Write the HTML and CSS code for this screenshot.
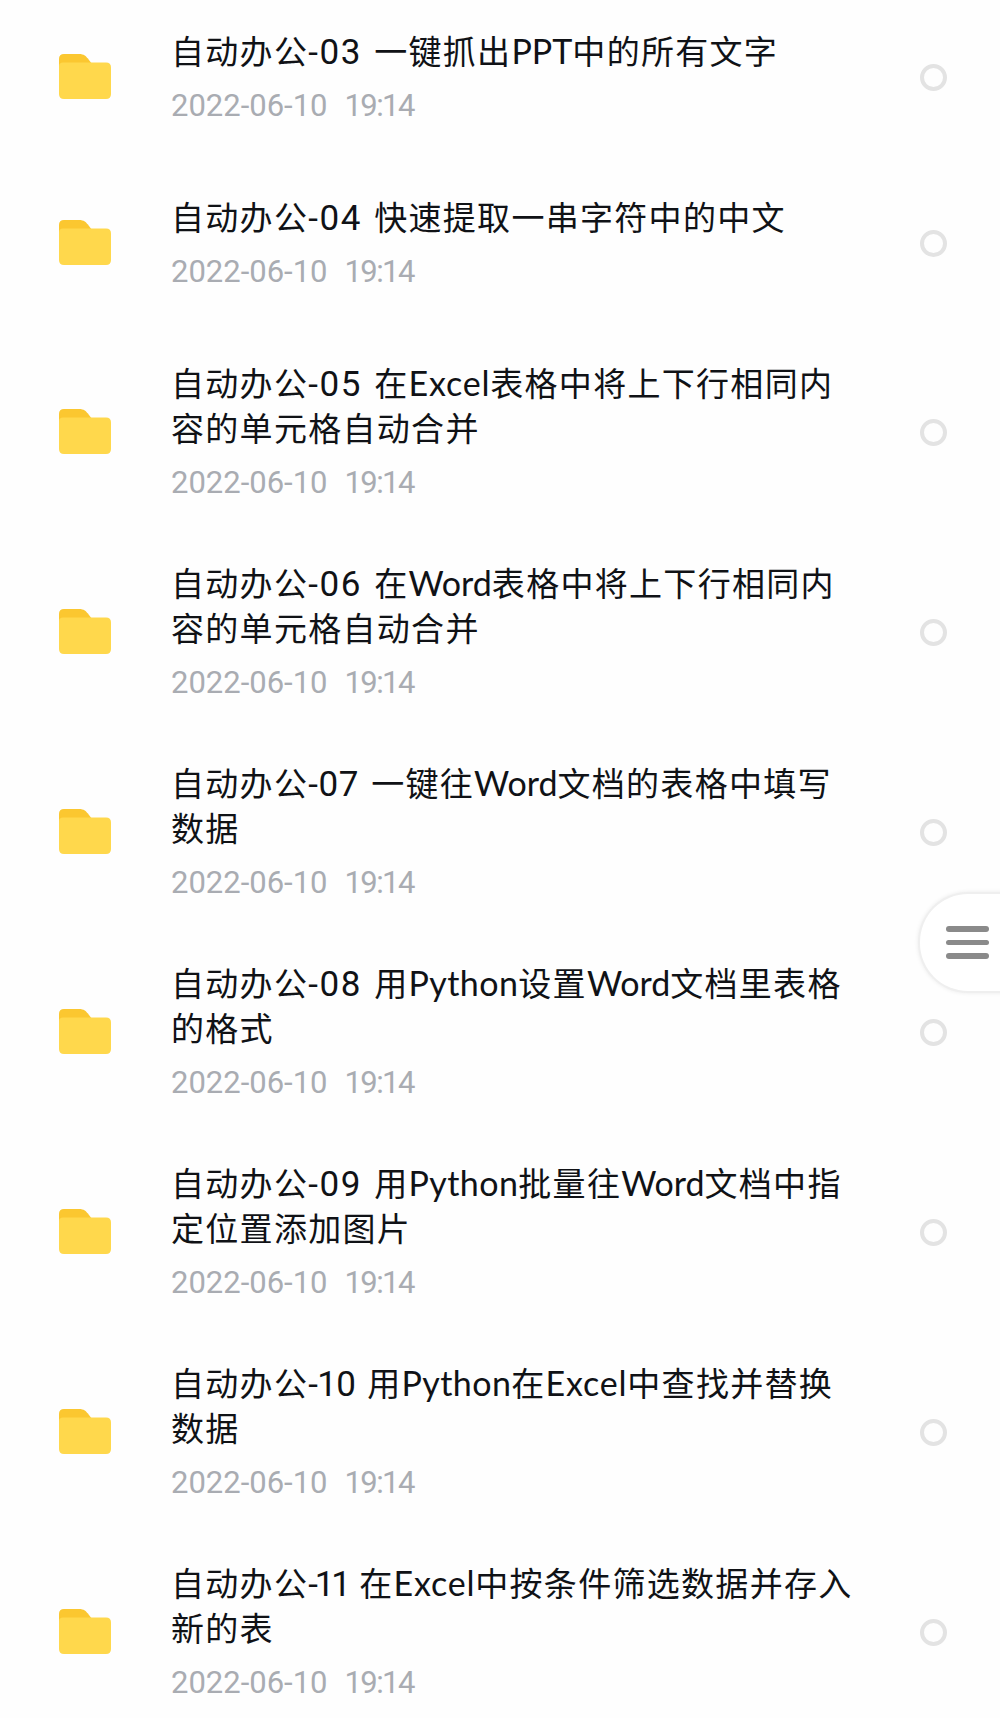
FILE: index.html
```html
<!DOCTYPE html>
<html lang="zh-CN">
<head>
<meta charset="utf-8">
<title>自动办公</title>
<link rel="stylesheet" href="styles.css">
</head>
<body>
<svg class="defs" width="0" height="0" aria-hidden="true">
  <symbol id="folder" viewBox="0 0 52 46">
    <path fill="#fbc730" d="M5 0H20C25 0 27 2 30 6L33 10V22H0V5Q0 0 5 0Z"/>
    <path fill="#ffd84c" d="M0 12Q0 8.500 4 8.500H47Q52 8.500 52 13.500V40Q52 45 47 45H5Q0 45 0 40Z"/>
  </symbol>
</svg>
<main class="list">
  <article class="row row-short"><svg class="folder"><use href="#folder"/></svg><div class="info"><h2 class="title">自动办公<span class="num">-03 </span>一键抓出<span class="latin">PPT</span>中的所有文字</h2><p class="date"><span>2022-06-10</span> <span class="time">19:14</span></p></div><span class="radio"></span></article>
  <article class="row row-short"><svg class="folder"><use href="#folder"/></svg><div class="info"><h2 class="title">自动办公<span class="num">-04 </span>快速提取一串字符中的中文</h2><p class="date"><span>2022-06-10</span> <span class="time">19:14</span></p></div><span class="radio"></span></article>
  <article class="row"><svg class="folder"><use href="#folder"/></svg><div class="info"><h2 class="title">自动办公<span class="num">-05 </span>在<span class="latin excel">Excel</span>表格中将上下行相同内<br>容的单元格自动合并</h2><p class="date"><span>2022-06-10</span> <span class="time">19:14</span></p></div><span class="radio"></span></article>
  <article class="row"><svg class="folder"><use href="#folder"/></svg><div class="info"><h2 class="title">自动办公<span class="num">-06 </span>在<span class="latin">Word</span>表格中将上下行相同内<br>容的单元格自动合并</h2><p class="date"><span>2022-06-10</span> <span class="time">19:14</span></p></div><span class="radio"></span></article>
  <article class="row"><svg class="folder"><use href="#folder"/></svg><div class="info"><h2 class="title">自动办公<span class="num num-07">-07 </span>一键往<span class="latin">Word</span>文档的表格中填写<br>数据</h2><p class="date"><span>2022-06-10</span> <span class="time">19:14</span></p></div><span class="radio"></span></article>
  <article class="row"><svg class="folder"><use href="#folder"/></svg><div class="info"><h2 class="title">自动办公<span class="num">-08 </span>用<span class="latin python">Python</span>设置<span class="latin">Word</span>文档里表格<br>的格式</h2><p class="date"><span>2022-06-10</span> <span class="time">19:14</span></p></div><span class="radio"></span></article>
  <article class="row"><svg class="folder"><use href="#folder"/></svg><div class="info"><h2 class="title">自动办公<span class="num">-09 </span>用<span class="latin python">Python</span>批量往<span class="latin">Word</span>文档中指<br>定位置添加图片</h2><p class="date"><span>2022-06-10</span> <span class="time">19:14</span></p></div><span class="radio"></span></article>
  <article class="row"><svg class="folder"><use href="#folder"/></svg><div class="info"><h2 class="title">自动办公<span class="num num-10">-10 </span>用<span class="latin python">Python</span>在<span class="latin excel">Excel</span>中查找并替换<br>数据</h2><p class="date"><span>2022-06-10</span> <span class="time">19:14</span></p></div><span class="radio"></span></article>
  <article class="row"><svg class="folder"><use href="#folder"/></svg><div class="info"><h2 class="title">自动办公<span class="num num-11">-11 </span>在<span class="latin excel">Excel</span>中按条件筛选数据并存入<br>新的表</h2><p class="date"><span>2022-06-10</span> <span class="time">19:14</span></p></div><span class="radio"></span></article>
</main>
<button class="menu" aria-label="菜单"><span class="bar"></span><span class="bar"></span><span class="bar"></span></button>
</body>
</html>
```
FILE: styles.css
```css
* { box-sizing: border-box; }
body {
  margin: 0;
  position: relative;
  height: 1718px;
  overflow: hidden;
  background: #fefefe;
  font-family: Lato, "Noto Sans CJK SC", sans-serif;
}
.defs { position: absolute; }
.row {
  display: grid;
  grid-template-columns: 52px 689px 28px;
  column-gap: 60px;
  align-items: center;
  height: 200px;
  padding-left: 59px;
}
.row-short { height: 166px; }
.row-short:first-child { margin-top: -6px; }
.row-short:nth-child(2) { margin-bottom: 6px; }
.folder { display: block; width: 52px; height: 46px; }
.info { white-space: nowrap; padding-top: 3px; }
.title {
  margin: 0;
  font-size: 33px;
  font-weight: 400;
  line-height: 45px;
  letter-spacing: 1.3px;
  color: #101216;
}
.latin { font-size: 34px; line-height: 1; letter-spacing: 0; }
.excel { letter-spacing: .8px; }
.python { letter-spacing: .4px; }
.num {
  display: inline-block;
  width: 66px;
  font-family: Roboto, sans-serif;
  font-size: 35px;
  line-height: 1;
  letter-spacing: 1.6px;
}
.num-07 { width: 63px; letter-spacing: .6px; }
.num-10 { width: 59px; letter-spacing: -.7px; }
.num-11 { width: 51px; letter-spacing: -3.2px; }
.date {
  display: flex;
  gap: 17px;
  margin: 9px 0 0;
  font-family: Roboto, sans-serif;
  font-size: 31px;
  line-height: 46px;
  color: #a9acb2;
}
.time { letter-spacing: -1.6px; }
.radio {
  width: 27px;
  height: 27px;
  border: 4px solid #e3e3e3;
  border-radius: 50%;
}
.menu {
  position: absolute;
  top: 892px;
  right: -4px;
  width: 86px;
  height: 101px;
  padding: 0 15px 0 26px;
  display: flex;
  flex-direction: column;
  justify-content: center;
  align-items: flex-start;
  gap: 8px;
  background: #fff;
  border: 2px solid #efefef;
  border-right: 0;
  border-radius: 50px 0 0 50px;
  box-shadow: 0 0 4px rgba(0, 0, 0, .08);
}
.bar { width: 43px; height: 5.400px; border-radius: 3px; background: #8a8a8a; }
```
